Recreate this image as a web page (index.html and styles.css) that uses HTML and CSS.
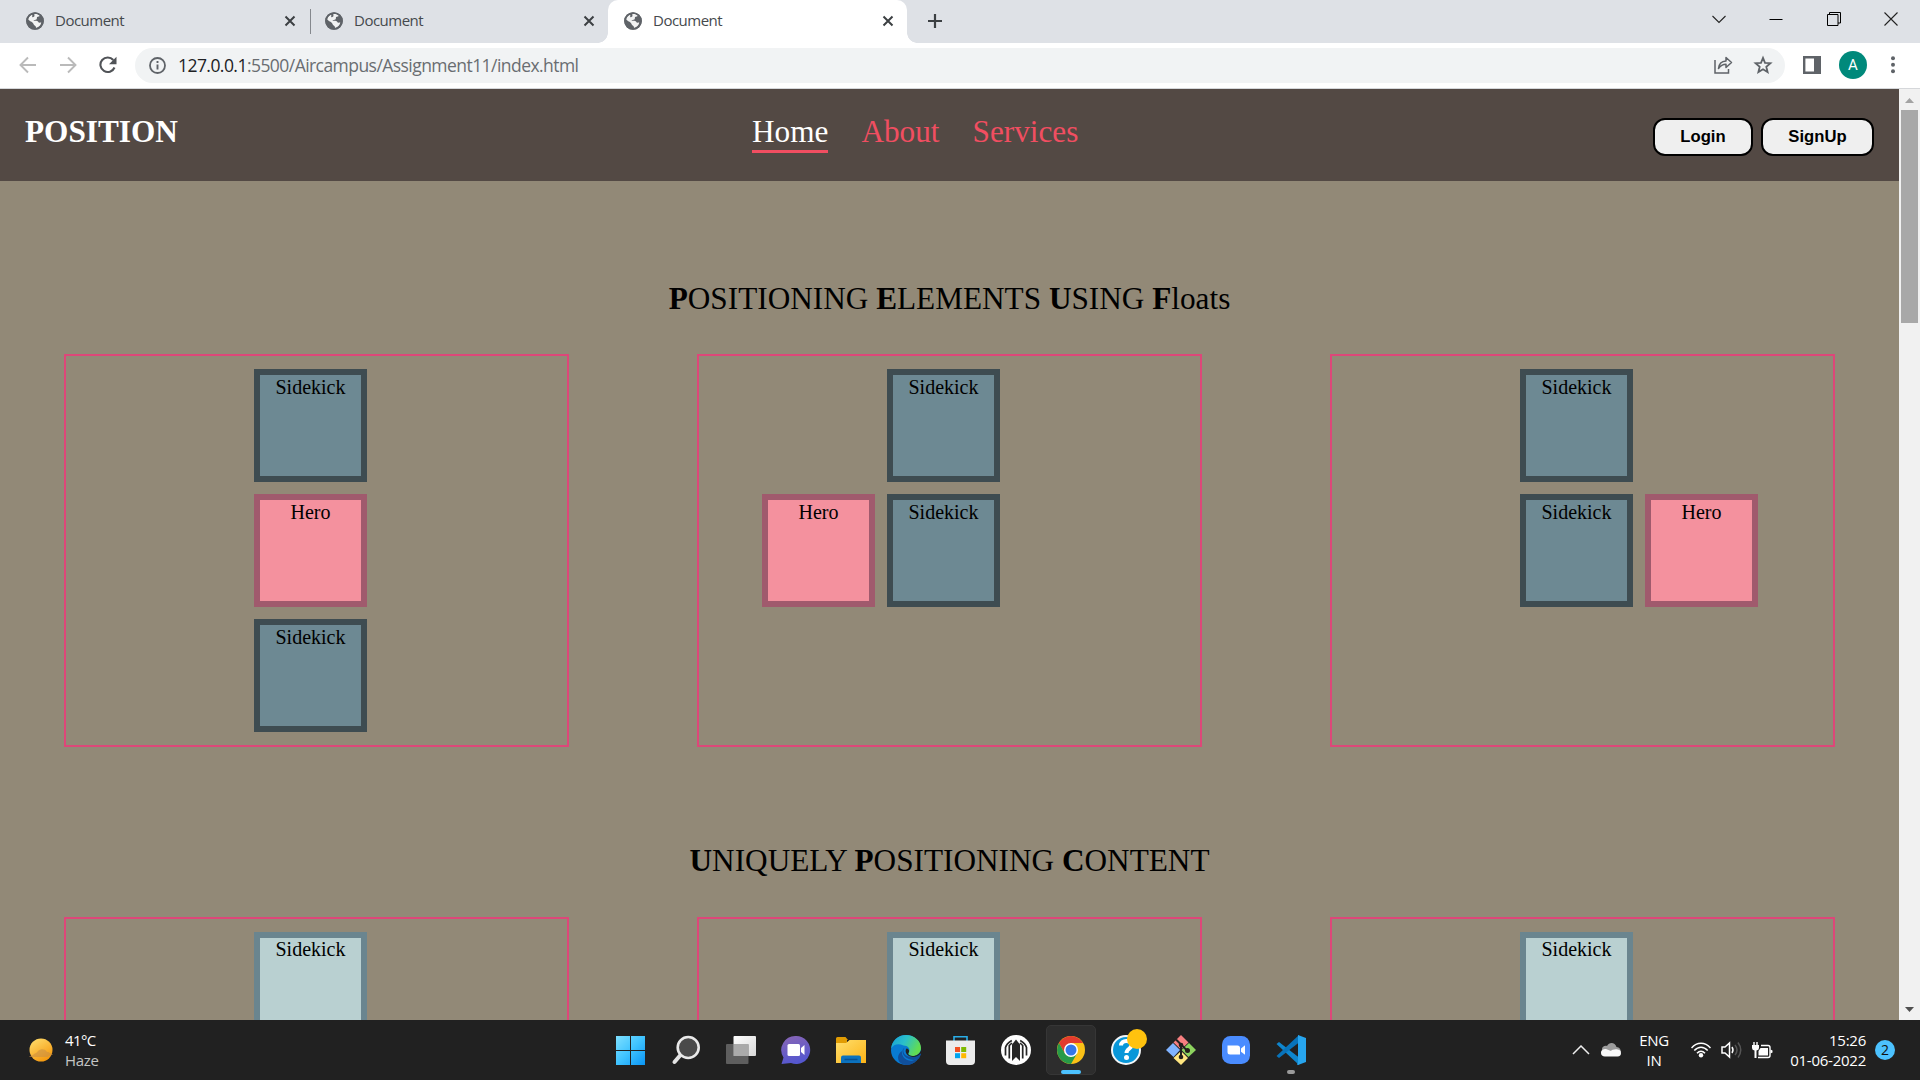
FILE: index.html
```html
<!DOCTYPE html>
<html lang="en">
<head>
<meta charset="utf-8">
<title>Document</title>
<link rel="stylesheet" href="styles.css">
</head>
<body>
<svg width="0" height="0" class="defs">
  <defs>
    <symbol id="globe" viewBox="0 0 18 18"><circle cx="9" cy="9" r="8.8" fill="#5f6368"/><path d="M8.200 2.200c2-.6 4.400 0 5.700 1.300-.5 1.200-1.800 1.300-2.800 1.500-.6.900.3 1.700-.7 2.400-.9.500-2.500.1-2.900 1.200 1.500.6 3.800-.3 4.700 1.200.5 1.300 1.500.7 3.100.7-.5 2.700-2.500 4.800-5.200 5.400-.2-1-.3-2-1.400-2.400-1.200-.6-1-2-2-2.800C5.200 9.500 3.300 9 2 7.300c.6-2 2-3.700 4-4.500.9.500-.2 1.600.3 2.300.9.600 1.700-.3 2.200-1z" fill="#fff" opacity=".92"/><circle cx="9" cy="9" r="8" fill="none" stroke="#5f6368" stroke-width="1.700"/></symbol>
    <symbol id="close" viewBox="0 0 12 12"><path d="M1.500 1.500l9 9M10.500 1.500l-9 9" stroke="#3c4043" stroke-width="2" fill="none"/></symbol>
  </defs>
</svg>

<div class="tabs">
  <div class="tab"><svg class="fav"><use href="#globe"/></svg><span class="tab-title">Document</span><svg class="x"><use href="#close"/></svg></div>
  <div class="tab second"><svg class="fav"><use href="#globe"/></svg><span class="tab-title">Document</span><svg class="x"><use href="#close"/></svg></div>
  <div class="tab active"><svg class="fav"><use href="#globe"/></svg><span class="tab-title">Document</span><svg class="x"><use href="#close"/></svg></div>
  <svg class="plus" width="16" height="16"><path d="M8 1v14M1 8h14" stroke="#3c4043" stroke-width="2.200"/></svg>
  <div class="window-buttons">
    <svg width="14" height="14"><path d="M.5 4l6.500 6.500L13.500 4" fill="none" stroke="#222" stroke-width="1.100"/></svg>
    <svg width="14" height="14"><path d="M.5 7.500h13" stroke="#000"/></svg>
    <svg width="14" height="14"><path d="M.5 2.500h10.500v11H.5zM2.500 2.500v-2h11v10.500h-2.500" fill="none" stroke="#000"/></svg>
    <svg width="14" height="14"><path d="M.5.5l13 13M13.500.5l-13 13" stroke="#222" stroke-width="1.100"/></svg>
  </div>
</div>

<div class="toolbar">
  <svg class="nav-icon" width="18" height="18" viewBox="0 0 18 18"><path d="M17 9H2M9 1.500L1.500 9 9 16.500" fill="none" stroke="#bababa" stroke-width="1.900"/></svg>
  <svg class="nav-icon" width="18" height="18" viewBox="0 0 18 18"><path d="M1 9h15M9 1.500L16.500 9 9 16.500" fill="none" stroke="#bababa" stroke-width="1.900"/></svg>
  <svg class="nav-icon" width="18" height="18" viewBox="0 0 18 18"><path d="M15.500 11.500A7.300 7.300 0 1 1 14.300 4" fill="none" stroke="#505357" stroke-width="2.100"/><path d="M17.500.8v7.400H10z" fill="#505357"/></svg>
  <div class="address">
    <svg width="17" height="17" viewBox="0 0 17 17"><circle cx="8.500" cy="8.500" r="7.500" fill="none" stroke="#5f6368" stroke-width="1.800"/><path d="M8.500 4v2M8.500 7.500v5" stroke="#5f6368" stroke-width="1.900"/></svg>
    <span class="url"><b>127.0.0.1</b>:5500/Aircampus/Assignment11/index.html</span>
    <svg class="share" width="20" height="20" viewBox="0 0 20 20"><path d="M2 5v13h13.500V14" fill="none" stroke="#5f6368" stroke-width="1.500"/><path d="M5.500 13.500C6 8.500 9 6.200 13 6V2.500l5.500 5-5.500 5V9.300c-3.500 0-5.500 1.200-7.500 4.200z" fill="none" stroke="#5f6368" stroke-width="1.500" stroke-linejoin="round"/></svg>
    <svg width="20" height="20" viewBox="0 0 20 20"><path d="M10 2.800l2 5 5.400.4-4.100 3.500 1.300 5.300L10 14.200 5.400 17l1.300-5.300-4.100-3.500L8 7.800z" fill="none" stroke="#5f6368" stroke-width="1.800"/></svg>
  </div>
  <svg class="panel" width="18" height="18"><path d="M1.200 1.200h15.600v15.600H1.200z" fill="#fff" stroke="#5f6368" stroke-width="2.400"/><path d="M11 1h6v16h-6z" fill="#5f6368"/></svg>
  <div class="avatar">A</div>
  <svg class="dots" width="4" height="18"><g fill="#5f6368"><circle cx="2" cy="2.200" r="2"/><circle cx="2" cy="8.700" r="2"/><circle cx="2" cy="15.200" r="2"/></g></svg>
</div>

<div class="viewport">
  <div class="page">
    <header class="site-header">
      <div class="logo">POSITION</div>
      <nav class="menu"><span class="current">Home</span><span>About</span><span>Services</span></nav>
      <div class="auth"><button class="login">Login</button><button class="signup">SignUp</button></div>
    </header>
    <section class="floats">
      <h2><b>P</b>OSITIONING <b>E</b>LEMENTS <b>U</b>SING <b>F</b>loats</h2>
      <div class="frames">
        <div class="frame"><div class="box mid">Sidekick</div><div class="box mid hero">Hero</div><div class="box mid">Sidekick</div></div>
        <div class="frame"><div class="box mid">Sidekick</div><div class="box hero left">Hero</div><div class="box mid">Sidekick</div></div>
        <div class="frame"><div class="box mid">Sidekick</div><div class="box mid">Sidekick</div><div class="box hero right">Hero</div></div>
      </div>
    </section>
    <section class="unique">
      <h2><b>U</b>NIQUELY <b>P</b>OSITIONING <b>C</b>ONTENT</h2>
      <div class="frames">
        <div class="frame"><div class="box mid pale">Sidekick</div></div>
        <div class="frame"><div class="box mid pale">Sidekick</div></div>
        <div class="frame"><div class="box mid pale">Sidekick</div></div>
      </div>
    </section>
  </div>
  <div class="scrollbar">
    <svg width="9" height="5"><path d="M0 5L4.500 0 9 5z" fill="#a3a3a3"/></svg>
    <div class="thumb"></div>
    <svg width="9" height="5"><path d="M0 0h9L4.500 5z" fill="#505050"/></svg>
  </div>
</div>

<div class="taskbar">
  <div class="weather">
    <svg width="26" height="24" viewBox="0 0 26 24"><defs><linearGradient id="sun" x1="0" y1="0" x2=".6" y2="1"><stop offset="0" stop-color="#ffe070"/><stop offset="1" stop-color="#f59a10"/></linearGradient></defs><circle cx="13" cy="12" r="11.500" fill="url(#sun)"/><path d="M1 19c1-2 4-1 5-3 1-1 3-1 4-3 3-3 8-2 9 1 3 0 3 2 6 2-1 2-4 1-5 3H1z" fill="#c98f45" opacity=".6"/></svg>
    <div><div class="temp">41°C</div><div class="haze">Haze</div></div>
  </div>
  <div class="apps">
    <div class="app"><svg width="30" height="30" viewBox="0 0 30 30"><defs><linearGradient id="win" x1="0" y1="0" x2="1" y2="1"><stop offset="0" stop-color="#7fe0ff"/><stop offset=".5" stop-color="#3fc3ff"/><stop offset="1" stop-color="#0a95f5"/></linearGradient></defs><path d="M0 1h14v14H0zM15 1h14v14H15zM0 16h14v14H0zM15 16h14v14H15z" fill="url(#win)"/></svg></div>
    <div class="app"><svg width="30" height="30" viewBox="0 0 30 30"><path d="M9.500 20L3.500 27" stroke="#e4e4e4" stroke-width="4" stroke-linecap="round"/><circle cx="17.200" cy="12.500" r="10.500" fill="#4a4a4a" stroke="#e9e9e9" stroke-width="2.600"/></svg></div>
    <div class="app"><svg width="30" height="30" viewBox="0 0 30 30"><defs><linearGradient id="tv" x1="0" y1="0" x2="1" y2="1"><stop offset="0" stop-color="#fff"/><stop offset="1" stop-color="#d8d8d8"/></linearGradient></defs><rect x="7.500" y="1" width="22.500" height="20" rx="1" fill="url(#tv)"/><rect x="0" y="9" width="22.500" height="20" rx="1" fill="#686868" opacity=".85"/><path d="M7.500 9h15v12h-15z" fill="#aaa"/></svg></div>
    <div class="app"><svg width="30" height="30" viewBox="0 0 30 30"><defs><linearGradient id="chat" x1="0" y1="0" x2=".3" y2="1"><stop offset="0" stop-color="#8a66b4"/><stop offset="1" stop-color="#5557cf"/></linearGradient></defs><path d="M15 1a14 14 0 1 1-5 27L.5 29l2-6.500A14 14 0 0 1 15 1z" fill="url(#chat)"/><rect x="6.500" y="9" width="12.500" height="12" rx="1.500" fill="#fff"/><path d="M20 13l3.500-3v10L20 17z" fill="#fff"/></svg></div>
    <div class="app"><svg width="30" height="30" viewBox="0 0 30 30"><defs><linearGradient id="folder" x1="0" y1="0" x2="1" y2="1"><stop offset="0" stop-color="#ffdf6d"/><stop offset="1" stop-color="#fcb316"/></linearGradient></defs><path d="M0 3.500Q0 2 1.500 2h8l2.500 3h-1v6H0z" fill="#e19c03"/><path d="M0 8h10l3.500-3H30v23H0z" fill="url(#folder)"/><path d="M5 28v-5.500q0-2 2-2h16q2 0 2 2V28z" fill="#0c72be"/><path d="M8.500 24.500h13" stroke="#075093" stroke-width="1.500"/></svg></div>
    <div class="app"><svg width="30" height="30" viewBox="0 0 30 30"><defs><linearGradient id="e1" x1="0" y1="0" x2="1" y2=".4"><stop offset="0" stop-color="#159fd9"/><stop offset=".5" stop-color="#2bc0c9"/><stop offset="1" stop-color="#62dc51"/></linearGradient></defs><circle cx="15" cy="15" r="15" fill="#087bd2"/><path d="M.2 13.500C1 5.500 7 0 15 0c8.500 0 15 6 15 13 0 5-4 8-8 8-3.500 0-5.500-1.500-4.500-3 2.500-4-.5-7.500-5-7.500C7 8 2.500 9.500.2 13.500z" fill="url(#e1)"/><path d="M11 16c-1 6 5 11 11 9.500 2-.4 4-1.500 5.300-2.500 0 0-5.600 9.500-15 6.500C5 27 6 19 11 16z" fill="#104f9b"/><path d="M13.500 13c-3 3 0 9 6.500 9 4 0 7-2 8.500-4l2.500-1-3 6.500C23 26.500 14.500 24.500 12 19c-1-3-.5-5 1.500-6z" fill="#104f9b"/><path d="M15.500 13.500c-2 2.500-.5 6 3 7.700 4 1.800 8.500.3 11-2.700l1 .5v-6c-.5 5-4.500 8-8.500 8-3.500 0-5.500-1.500-4.500-3 1.200-2 .8-4-2-4.500z" fill="#212121"/></svg></div>
    <div class="app"><svg width="30" height="30" viewBox="0 0 30 30"><path d="M8 7V1.700h13V7" fill="none" stroke="#2aaee8" stroke-width="1.600"/><path d="M0 5.500h29V26q0 4-4 4H4q-4 0-4-4z" fill="#ececec"/><path d="M9 12h5v5H9z" fill="#f25022"/><path d="M15.200 12h5v5h-5z" fill="#7fba00"/><path d="M9 18.200h5v5H9z" fill="#00a4ef"/><path d="M15.200 18.200h5v5h-5z" fill="#ffb900"/></svg></div>
    <div class="app"><svg width="30" height="30" viewBox="0 0 30 30"><circle cx="15" cy="15" r="15" fill="#fff"/><path d="M4.500 20.500V12.500Q5.500 8.500 10.800 5.500M25.500 20.500V12.500Q24.500 8.500 19.200 5.500M8.300 23.500V10.500L11 8M21.700 23.500V10.500L19 8" fill="none" stroke="#252525" stroke-width="1.700"/><path d="M15 4.500l4 5v16.500L15 22l-4 4V9.500z" fill="#252525"/></svg></div>
    <div class="app selected"><svg width="30" height="30" viewBox="0 0 30 30"><circle cx="15" cy="15" r="14" fill="#fbc116"/><path d="M2.900 8A14 14 0 0 1 27.100 8H15L9 18.500z" fill="#e33b2e"/><path d="M2.900 8A14 14 0 0 0 15 29l6-10.500H9z" fill="#279a48"/><circle cx="15" cy="15" r="7" fill="#fff"/><circle cx="15" cy="15" r="5.500" fill="#3577e8"/></svg><i class="bar"></i></div>
    <div class="app"><svg class="help" width="36" height="36" viewBox="0 0 36 36"><circle cx="15" cy="21" r="14" fill="#0997d9" stroke="#f3f6f8" stroke-width="2"/><path d="M10 16.500c0-6 10.500-6 10.500-.5 0 4-5 3.500-5 8" fill="none" stroke="#fff" stroke-width="4"/><circle cx="15.500" cy="28.500" r="2.500" fill="#fff"/><circle cx="26" cy="10" r="10" fill="#ffc20e"/></svg></div>
    <div class="app"><svg width="30" height="30" viewBox="0 0 30 30"><path d="M15 0l7.500 7.500-7.500 7-7.500-7z" fill="#f77f80"/><path d="M7 8l7 7-6.500 7L0 15z" fill="#80b3ff"/><path d="M23 8l7 7-7.500 7-7-7z" fill="#8dd35f"/><path d="M15 16l7 7-7 7-7.500-7z" fill="#ffe680"/><path d="M10 4.500l5 5V23M15 9.500l6.500 6.500" fill="none" stroke="#212121" stroke-width="2"/><g fill="#241f1c"><circle cx="15" cy="10" r="2.300"/><circle cx="15" cy="22" r="2.300"/><circle cx="21.500" cy="15.500" r="2.500"/></g></svg></div>
    <div class="app"><svg width="30" height="30" viewBox="0 0 30 30"><rect x="1" y="1" width="28" height="28" rx="8.500" fill="#4a8cff"/><path d="M6.500 10.500h10q2.500 0 2.500 2.500v6.500H9q-2.500 0-2.500-2.500zM20 13.500l4-3.300v9.600l-4-3z" fill="#fff"/></svg></div>
    <div class="app"><svg width="30" height="30" viewBox="0 0 30 30"><path d="M.5 9L3 7l20 15.500V30z" fill="#0e86ce"/><path d="M.5 21L3 23 23 7.500V0z" fill="#0873ba"/><path d="M22 0l8 3v24l-8 3-1-.5 1-2V2.500z" fill="#27a5ee"/></svg><i class="bar idle"></i></div>
  </div>
  <div class="tray">
    <svg class="caret" width="18" height="10"><path d="M1 9l8-8 8 8" fill="none" stroke="#eee" stroke-width="1.500"/></svg>
    <svg class="cloud" width="20" height="14" viewBox="0 0 20 14"><path d="M2 9C-1 5 3 2 6 3c2-4 8-4 9.500 1 3 0 4.500 3 4.500 5z" fill="#9c9c9c"/><path d="M0 10c0-3 2-4 5-4l5 2c1-2 10-3 10 2 0 2-1 3.500-3.500 3.500H4C1.500 13.500 0 12 0 10z" fill="#f8f8f8"/></svg>
    <div class="lang"><div>ENG</div><div>IN</div></div>
    <svg class="wifi" width="20" height="16" viewBox="0 0 20 16"><g fill="none" stroke="#fff" stroke-width="1.500"><path d="M.5 6C6-.2 14-.2 19.500 6M3.300 8.500c4-4.500 9.400-4.500 13.400 0M6 11.200c2.500-2.700 5.500-2.700 8 0"/></g><circle cx="10" cy="13.300" r="2.200" fill="#fff"/></svg>
    <svg class="sound" width="21" height="18" viewBox="0 0 21 18"><g fill="none" stroke="#fff" stroke-width="1.500"><path d="M1 6h3l4.500-4v14L4 12H1zM11 6q2 3 0 6"/><path d="M14 4q4 5 0 10M17 1.500q5.500 7.500 0 15" stroke="#555"/></g></svg>
    <svg class="battery" width="21" height="17" viewBox="0 0 21 17"><path d="M2 0v4M5 0v4" stroke="#fff" stroke-width="1.400"/><path d="M0 3h7v3q0 2-2.500 2.500V16H2.500V8.500Q0 8 0 6z" fill="#fff"/><path d="M9 3.500h7q2 0 2 2v8q0 2-2 2H6" fill="none" stroke="#fff" stroke-width="1.400"/><path d="M8.500 6H16v7.500H6.500V9z" fill="#fff"/><path d="M18.500 7.500l2 1v2l-2 1z" fill="#fff"/></svg>
    <div class="clock"><div class="time">15:26</div><div>01-06-2022</div></div>
    <div class="badge">2</div>
  </div>
</div>
</body>
</html>
```
FILE: styles.css
```css
* { box-sizing: border-box; }
body {
  margin: 0;
  width: 1920px;
  height: 1080px;
  overflow: hidden;
  display: flex;
  flex-direction: column;
  font-family: "Open Sans", "Noto Sans", sans-serif;
}
svg { display: block; flex: none; }
.defs { position: absolute; }

/* Browser tabs */
.tabs { height: 43px; flex: none; background: #dee1e6; display: flex; align-items: center; }
.tab {
  width: 310px;
  height: 43px;
  display: flex;
  align-items: center;
  padding: 0 14px 2px 26px;
  font-size: 15px;
  color: #45494d;
}
.fav { width: 18px; height: 18px; margin-right: 11px; }
.x { width: 12px; height: 12px; }
.tab-title { flex: 1; letter-spacing: -0.5px; padding-bottom: 2px; }
.second {
  width: 298px;
  padding-left: 15px;
  padding-right: 13px;
  background: linear-gradient(#85888d, #85888d) 0 9px / 1px 25px no-repeat;
}
.active { position: relative; width: 299px; padding-left: 16px; padding-right: 13px; background: #fff; border-radius: 10px 10px 0 0; }
.active::before, .active::after {
  content: "";
  position: absolute;
  bottom: 0;
  width: 10px;
  height: 10px;
}
.active::before { left: -10px; background: radial-gradient(circle at 0 0, transparent 9.5px, #fff 10px); }
.active::after { right: -10px; background: radial-gradient(circle at 100% 0, transparent 9.5px, #fff 10px); }
.plus { margin: 0 0 2px 20px; }
.window-buttons { display: flex; gap: 43.500px; margin: 0 22px 6px auto; }

/* Address bar */
.toolbar {
  height: 46px;
  flex: none;
  background: #fff;
  border-bottom: 1px solid #d5d7da;
  display: flex;
  align-items: center;
  padding: 0 22px 1px 19px;
}
.nav-icon { margin-right: 22px; }
.address {
  width: 1650px;
  height: 35px;
  border-radius: 18px;
  background: #f1f3f4;
  display: flex;
  align-items: center;
  padding: 0 12px 0 14px;
  margin-left: -4px;
}
.url { margin-left: 12px; font-size: 17.500px; letter-spacing: -0.55px; color: #696d71; white-space: nowrap; }
.url b { font-weight: 400; color: #202124; }
.share { margin: 0 20px 0 auto; }
.panel { margin-left: 18px; }
.avatar {
  width: 28px;
  height: 28px;
  margin: 0 24px 0 18px;
  border-radius: 50%;
  background: #00897b;
  color: #fff;
  font: 15px/29px Roboto, sans-serif;
  text-align: center;
}

/* Page content */
.viewport { height: 931px; flex: none; display: flex; }
.page {
  width: 1899px;
  height: 931px;
  overflow: hidden;
  background: #928977;
  font-family: "Liberation Serif", "Times New Roman", serif;
  color: #000;
}
.site-header {
  height: 92px;
  background: #534944;
  display: grid;
  grid-template-columns: 727px 1fr auto;
  align-items: start;
  padding: 25px 25px 0;
  font-size: 31.250px;
  line-height: 36px;
}
.logo { color: #fff; font-weight: 700; }
.menu { display: flex; gap: 33px; color: #f14e61; }
.current { color: #fff; height: 39px; border-bottom: 3px solid #f14e61; }
.auth { display: flex; gap: 8px; margin-top: 4px; }
.auth button {
  width: 100px;
  height: 38px;
  padding: 0;
  border: 2px solid #000;
  border-radius: 12px;
  background: #efefef;
  color: #000;
  font: bold 16.667px "Liberation Sans", Arial, sans-serif;
}
.auth .signup { width: 113px; }
.floats { padding-top: 100px; }
.unique { padding-top: 96px; }
h2 { margin: 0 0 37px; font-size: 31.250px; line-height: 36px; font-weight: 400; text-align: center; }
.unique h2 { margin-bottom: 38px; }
.frames { display: grid; grid-template-columns: repeat(3, 505px); gap: 128px; padding-left: 64px; }
.frame {
  height: 393px;
  border: 2px solid #dd4779;
  display: grid;
  grid-template-columns: repeat(3, 113px);
  grid-auto-rows: 113px;
  gap: 12px;
  padding: 13px 0 0 63px;
}
.box {
  background: #6d8993;
  border: 6px solid #3e4c51;
  font-size: 20px;
  line-height: 23px;
  text-align: center;
  padding-top: 1px;
}
.mid { grid-column: 2; }
.left { grid-column: 1; }
.right { grid-column: 3; }
.hero { background: #f4919e; border-color: #a05a6d; }
.pale { background: #b9d0d1; border-color: #6a858f; padding-top: 0; }

/* Scrollbar */
.scrollbar {
  width: 21px;
  background: #f1f1f1;
  display: flex;
  flex-direction: column;
  align-items: center;
  padding: 9px 0 8px;
}
.thumb { width: 17px; height: 213px; margin: 7px 0 auto; background: #a8a8a8; }

/* Taskbar */
.taskbar {
  height: 60px;
  flex: none;
  background: #212121;
  display: grid;
  grid-template-columns: 606px 1fr auto;
  align-items: center;
  color: #fff;
  font-size: 15px;
  line-height: 20px;
}
.weather { display: flex; align-items: center; gap: 11px; padding-left: 28px; letter-spacing: -0.6px; }
.haze { color: #c5c5c5; letter-spacing: -0.3px; }
.apps { display: flex; gap: 5px; }
.app { position: relative; width: 50px; height: 50px; border-radius: 5px; display: flex; align-items: center; justify-content: center; }
.selected { background: #2d2d2d; border: 1px solid #363636; }
.help { margin: -6px 0 0 6px; }
.bar { position: absolute; bottom: 0; left: 14px; width: 20px; height: 4px; border-radius: 2px; background: #4cc2ff; }
.idle { left: 21px; bottom: 1px; width: 8px; background: #9a9a9a; }
.tray { display: flex; align-items: center; padding-right: 25px; }
.cloud { margin-left: 11px; }
.lang { margin-left: 18px; text-align: center; width: 30px; letter-spacing: -0.3px; }
.wifi { margin-left: 22px; }
.sound { margin-left: 10px; }
.battery { margin-left: 10px; }
.clock { width: 80px; margin-left: 13px; text-align: right; white-space: nowrap; letter-spacing: -0.25px; }
.badge { width: 20px; height: 20px; margin-left: 9px; border-radius: 50%; background: #4cc2ff; color: #111; text-align: center; font-size: 14px; line-height: 20px; }
```
